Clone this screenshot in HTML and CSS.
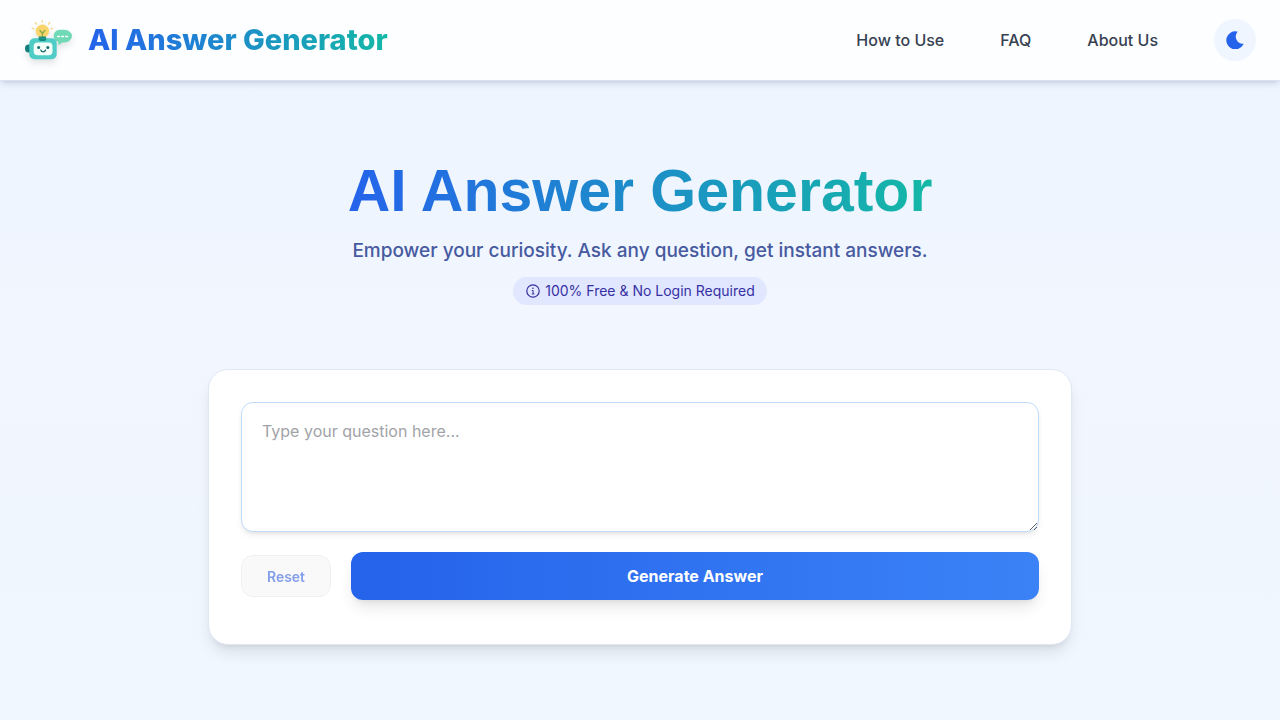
FILE: index.html
```html
<!DOCTYPE html>
<html lang="en">
<head>
    <meta charset="UTF-8">
    <meta name="viewport" content="width=device-width, initial-scale=1.0">
    <title>AI Answer Generator</title>
    <link rel="stylesheet" href="styles.css">
</head>
<body>
    <header class="site-header">
        <a class="brand" href="#">
            <svg class="brand-logo" viewBox="0 0 48 48" fill="none" aria-hidden="true">
                <!-- Light bulb -->
                <path d="M18.300 6V4.500M12.300 8.200l-1-1.500M24.500 8.200l1.200-1.700M9.800 12.800l-1.600-.6M27 12.800l1.600-.6" stroke="#f6cf72" stroke-width="1.200" stroke-linecap="round"/>
                <path d="M11.700 15.300a6.700 6.700 0 1 1 13.400 0c0 3-1.800 4-3 5.700h-7.400c-1.200-1.700-3-2.700-3-5.700z" fill="#fad56c"/>
                <path d="M18.400 21v-3.500l-2.400-3M18.400 17.500l2.400-3" stroke="#8fae4a" stroke-width="1.500" stroke-linecap="round"/>
                <path d="M14.800 20.500h7.200v3h-7.200z" fill="#168c80"/>
                <!-- Speech bubble -->
                <path d="M37 13.800h3.500a7.500 6.300 0 0 1 0 12.600h-2.500c-1 1.500-2.500 2.200-4.500 2.300.9-1 1-1.800.8-2.800A6.500 6.200 0 0 1 37 13.800z" fill="#70d9b6"/>
                <path d="M33.800 20.500h1.600m2.400 0h1.600m2.400 0h1.600" stroke="#fff" stroke-width="1.600" stroke-linecap="round"/>
                <!-- Robot head -->
                <path d="M6 28.500H4.500a3.500 4 0 0 0 0 8H6z" fill="#147e7c"/>
                <rect x="5.300" y="22.300" width="27.400" height="21" rx="5" fill="#4eccc5"/>
                <path d="M14.500 22.300h8c0 2-1 2.700-2.200 2.700h-3.600c-1.200 0-2.200-.7-2.200-2.700z" fill="#168c80"/>
                <rect x="9.700" y="26.500" width="18.800" height="12.800" rx="4" fill="#f5fff9"/>
                <circle cx="14.600" cy="31.600" r="1.500" fill="#176d70"/>
                <circle cx="23.800" cy="31.600" r="1.500" fill="#176d70"/>
                <path d="M16.800 34c.8 2.400 4 2.400 4.800 0" stroke="#176d70" stroke-width="1.300" stroke-linecap="round"/>
            </svg>
            <span class="brand-name">AI Answer Generator</span>
        </a>
        <nav class="site-nav">
            <a href="#how-to-use">How to Use</a>
            <a href="#faq">FAQ</a>
            <a href="#about">About Us</a>
            <button class="theme-toggle" type="button" aria-label="Toggle dark mode">
                <svg viewBox="0 0 18 18" fill="currentColor" aria-hidden="true">
                    <path d="M10.800.4A9 9 0 1 0 17.300 13.400c.3-.4 0-.8-.5-.7A7.200 7.200 0 0 1 11.200 1.200c.4-.4.1-.8-.4-.8z"/>
                </svg>
            </button>
        </nav>
    </header>

    <main>
        <section class="hero">
            <h1>AI Answer Generator</h1>
            <p class="tagline">Empower your curiosity. Ask any question, get instant answers.</p>
            <span class="badge">
                <svg viewBox="0 0 16 16" fill="none" stroke="currentColor" aria-hidden="true">
                    <circle cx="8" cy="8" r="6.200" stroke-width="1.200"/>
                    <path d="M6.800 7.500h1.300V11M6.800 11h2.600" stroke-width="1"/>
                    <circle cx="8" cy="5.300" r=".8" fill="currentColor" stroke="none"/>
                </svg>
                100% Free &amp; No Login Required
            </span>
        </section>

        <form class="card">
            <textarea class="question" placeholder="Type your question here..." aria-label="Your question"></textarea>
            <div class="actions">
                <button class="reset-btn" type="reset" disabled>Reset</button>
                <button class="generate-btn" type="button">Generate Answer</button>
            </div>
        </form>
    </main>
</body>
</html>
```

FILE: styles.css
```css
* {
    margin: 0;
    padding: 0;
    box-sizing: border-box;
}
body {
    min-height: 100vh;
    background: linear-gradient(to bottom, #ebf4ff 0, #f1f6ff 300px, #f0f7ff 720px);
    color: #374151;
    font-family: 'Inter', sans-serif;
    font-size: 16px;
    line-height: 24px;
}
button, textarea {
    font-family: inherit;
}
.site-header {
    display: flex;
    align-items: center;
    justify-content: space-between;
    min-height: 81px;
    padding: 0 24px;
    border-bottom: 1px solid #dbe3f2;
    background: #fcfeff;
    box-shadow: 0 4px 6px -1px rgba(30, 41, 90, 0.12), 0 2px 4px -2px rgba(30, 41, 90, 0.12);
}
.brand {
    display: flex;
    align-items: center;
    gap: 16px;
    text-decoration: none;
}
.brand-logo {
    width: 48px;
    height: 48px;
    filter: drop-shadow(0 4px 3px rgba(0, 0, 0, 0.1));
}
.brand-name, h1 {
    background: linear-gradient(to right, #2563eb, #14b8a6);
    background-clip: text;
    -webkit-background-clip: text;
    color: transparent;
}
.brand-name {
    font-size: 29px;
    font-weight: 800;
    line-height: 36px;
}
.site-nav {
    display: flex;
    align-items: center;
    gap: 56px;
}
.site-nav a {
    color: #374151;
    font-weight: 500;
    text-decoration: none;
}
.theme-toggle {
    display: flex;
    align-items: center;
    justify-content: center;
    width: 42px;
    height: 42px;
    border: none;
    border-radius: 50%;
    background: #eff6ff;
    color: #2563eb;
    cursor: pointer;
}
.theme-toggle svg {
    width: 18px;
    height: 18px;
}
.hero {
    display: flex;
    flex-direction: column;
    align-items: center;
    padding: 80px 16px 64px;
    text-align: center;
}
h1 {
    font-family: 'Liberation Sans', sans-serif;
    font-size: 59px;
    font-weight: 700;
    line-height: 60px;
}
.tagline {
    margin: 16px 0 12px;
    color: #475aa0;
    font-size: 19px;
    font-weight: 500;
    line-height: 28px;
}
.badge {
    display: inline-flex;
    align-items: center;
    gap: 4px;
    padding: 4px 12px;
    border-radius: 14px;
    background: #e0e7ff;
    color: #3730a3;
    font-size: 14px;
    line-height: 20px;
}
.badge svg {
    width: 16px;
    height: 16px;
}
.card {
    width: calc(100% - 32px);
    max-width: 864px;
    margin: 0 auto;
    padding: 32px 32px 44px;
    border: 1px solid #e0e7f5;
    border-radius: 20px;
    background: #fff;
    box-shadow: 0 10px 15px -3px rgba(0, 0, 0, 0.1), 0 4px 6px -4px rgba(0, 0, 0, 0.1);
}
.question {
    display: block;
    width: 100%;
    height: 130px;
    padding: 16px 20px;
    border: 1px solid #bfdbfe;
    border-radius: 12px;
    background: #fff;
    color: #1f2937;
    font-size: 16px;
    line-height: 24px;
    resize: vertical;
    box-shadow: 0 4px 6px -1px rgba(0, 0, 0, 0.08), 0 2px 4px -2px rgba(0, 0, 0, 0.08);
}
.question::placeholder {
    color: #a1a3a8;
}
.question:focus {
    outline: 2px solid #3b82f6;
}
.actions {
    display: flex;
    align-items: center;
    gap: 20px;
    margin-top: 20px;
}
.reset-btn {
    min-width: 90px;
    height: 42px;
    padding: 0 20px;
    border: 1px solid #e2e4e8;
    border-radius: 12px;
    background: #f5f5f6;
    color: #1d4ed8;
    font-size: 14px;
    font-weight: 600;
}
.reset-btn:disabled {
    opacity: 0.55;
}
.generate-btn {
    flex: 1;
    height: 48px;
    border: none;
    border-radius: 12px;
    background: linear-gradient(to right, #2563eb, #3b82f6);
    color: #fff;
    font-size: 16px;
    font-weight: 700;
    cursor: pointer;
    box-shadow: 0 10px 15px -3px rgba(0, 0, 0, 0.1), 0 4px 6px -4px rgba(0, 0, 0, 0.1);
}
@media (max-width: 700px) {
    .site-nav a { display: none; }
    .brand-name { font-size: 20px; }
    h1 { font-size: 36px; line-height: 44px; }
    .card { padding: 20px; }
}
```
